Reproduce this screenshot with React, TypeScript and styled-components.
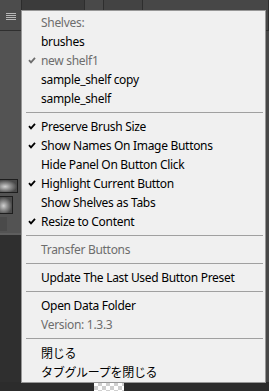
import styled, { createGlobalStyle } from "styled-components";

const GlobalStyle = createGlobalStyle`
  html, body {
    margin: 0;
    padding: 0;
    background: #3a3a3a;
    overflow: hidden;
  }
`;

const Desktop = styled.div`
  position: relative;
  width: 269px;
  height: 391px;
  display: flex;
  flex-direction: column;
  background: #3a3a3a;
  overflow: hidden;
`;

const TopBar = styled.div`
  height: 30px;
  display: flex;
  background: #3d3d3d;
  border-bottom: 1px solid #2f2f2f;
`;

const DockTab = styled.div`
  width: 21px;
  display: flex;
  align-items: center;
  justify-content: center;
  background: #4c4c4c;
  border-right: 1px solid #2c2c2c;
`;

const Hamburger = styled.div`
  width: 10px;
  display: flex;
  flex-direction: column;
  gap: 1px;
  margin-top: 2px;
  & span {
    height: 1px;
    background: #b8b8b8;
  }
`;

const TopStrip = styled.div<{ $bg: string; $w?: number }>`
  width: ${(p) => (p.$w ? `${p.$w}px` : "auto")};
  flex: ${(p) => (p.$w ? "none" : "1")};
  background: ${(p) => p.$bg};
  border-right: 1px solid #2e2e2e;
`;

const Middle = styled.div`
  flex: 1;
  display: flex;
`;

const LeftPanel = styled.div`
  width: 21px;
  display: flex;
  flex-direction: column;
  background: #535353;
`;

const PanelSpacer = styled.div`
  height: 148px;
`;

const Thumb = styled.div<{ $w: number; $h: number }>`
  width: ${(p) => p.$w}px;
  height: ${(p) => p.$h}px;
  margin-bottom: 3px;
  border: 1px solid #1e1e1e;
  border-left: none;
  background: radial-gradient(ellipse at 30% 55%, #d0d0d0 0%, #8a8a8a 35%, #4a4a4a 70%);
`;

const PanelFoot = styled.div`
  height: 14px;
  width: 7px;
  background: #4a4a4a;
`;

const PanelLower = styled.div`
  flex: 1;
  margin-top: 2px;
  border-top: 2px solid #5e5e5e;
  background: #2f2f2f;
`;

const Canvas = styled.div`
  flex: 1;
  background: #474747;
`;

const BottomBar = styled.div`
  height: 9px;
  display: flex;
  background: #2c2c2c;
`;

const Checker = styled.div`
  width: 30px;
  margin-left: 94px;
  background-color: #ffffff;
  background-image: linear-gradient(45deg, #cfcfcf 25%, transparent 25%, transparent 75%, #cfcfcf 75%),
    linear-gradient(45deg, #cfcfcf 25%, transparent 25%, transparent 75%, #cfcfcf 75%);
  background-size: 8px 8px;
  background-position: 0 0, 4px 4px;
`;

const Menu = styled.div`
  position: absolute;
  left: 21px;
  top: 10px;
  width: 243px;
  padding: 2px 0 1px;
  background: #f0f0f0;
  border: 1px solid #979797;
  font-family: "Noto Sans", "Noto Sans CJK JP", sans-serif;
  font-size: 12px;
  letter-spacing: -0.3px;
  color: #000000;
`;

const Item = styled.div<{ $disabled?: boolean }>`
  height: 19px;
  display: flex;
  align-items: center;
  padding-left: 19px;
  position: relative;
  white-space: nowrap;
  color: ${(p) => (p.$disabled ? "#6d6d6d" : "#000000")};
`;

const Check = styled.svg`
  position: absolute;
  left: 6px;
  top: 6px;
`;

const Separator = styled.div`
  height: 9px;
  display: flex;
  align-items: center;
  padding: 0 2px 0 4px;
  &::after {
    content: "";
    flex: 1;
    height: 1px;
    margin-top: -1px;
    background: #a0a0a0;
  }
`;

type Entry =
  | { kind: "item"; label: string; checked?: boolean; disabled?: boolean }
  | { kind: "sep" };

const entries: Entry[] = [
  { kind: "item", label: "Shelves:", disabled: true },
  { kind: "item", label: "brushes" },
  { kind: "item", label: "new shelf1", checked: true, disabled: true },
  { kind: "item", label: "sample_shelf copy" },
  { kind: "item", label: "sample_shelf" },
  { kind: "sep" },
  { kind: "item", label: "Preserve Brush Size", checked: true },
  { kind: "item", label: "Show Names On Image Buttons", checked: true },
  { kind: "item", label: "Hide Panel On Button Click" },
  { kind: "item", label: "Highlight Current Button", checked: true },
  { kind: "item", label: "Show Shelves as Tabs" },
  { kind: "item", label: "Resize to Content", checked: true },
  { kind: "sep" },
  { kind: "item", label: "Transfer Buttons", disabled: true },
  { kind: "sep" },
  { kind: "item", label: "Update The Last Used Button Preset" },
  { kind: "sep" },
  { kind: "item", label: "Open Data Folder" },
  { kind: "item", label: "Version: 1.3.3", disabled: true },
  { kind: "sep" },
  { kind: "item", label: "閉じる" },
  { kind: "item", label: "タブグループを閉じる" },
];

function CheckMark({ color }: { color: string }) {
  return (
    <Check width="8" height="7" viewBox="0 0 8 7">
      <path d="M1 3.2 L3 5.4 L7 0.8" fill="none" stroke={color} strokeWidth="1.8" />
    </Check>
  );
}

export default function App() {
  return (
    <>
      <GlobalStyle />
      <Desktop>
        <TopBar>
          <DockTab>
            <Hamburger>
              <span />
              <span />
              <span />
              <span />
            </Hamburger>
          </DockTab>
          <TopStrip $bg="#3b3b3b" $w={62} />
          <TopStrip $bg="#494949" $w={18} />
          <TopStrip $bg="#434343" $w={38} />
          <TopStrip $bg="#474747" />
        </TopBar>
        <Middle>
          <LeftPanel>
            <PanelSpacer />
            <Thumb $w={17} $h={12} />
            <Thumb $w={12} $h={16} />
            <PanelFoot />
            <PanelLower />
          </LeftPanel>
          <Canvas />
        </Middle>
        <BottomBar>
          <Checker />
        </BottomBar>
        <Menu>
          {entries.map((e, i) =>
            e.kind === "sep" ? (
              <Separator key={i} />
            ) : (
              <Item key={i} $disabled={e.disabled}>
                {e.checked && <CheckMark color={e.disabled ? "#6d6d6d" : "#000000"} />}
                {e.label}
              </Item>
            )
          )}
        </Menu>
      </Desktop>
    </>
  );
}
